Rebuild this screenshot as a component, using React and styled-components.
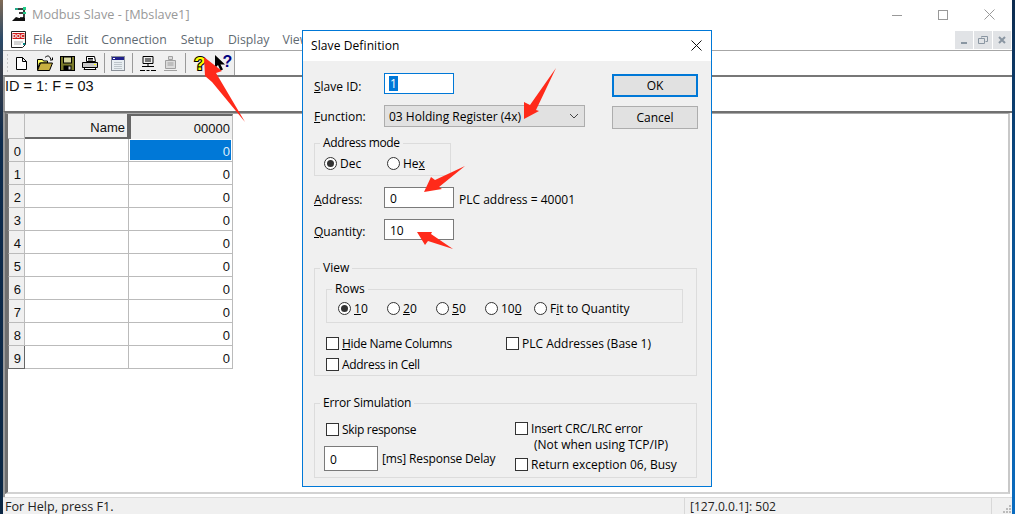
import React from 'react';
import styled, { createGlobalStyle } from 'styled-components';

const Global = createGlobalStyle`
  html, body { margin: 0; padding: 0; background: #0d2b4e; }
  * { box-sizing: border-box; }
`;

const Page = styled.div`
  position: relative; width: 1015px; height: 514px; overflow: hidden; display: flex;
  font-family: "Open Sans", "Noto Sans", sans-serif; font-size: 12px; color: #000;
`;
const DesktopLeft = styled.div`
  width: 3px; background: linear-gradient(#7f6a55 0, #2a4a6a 40px, #3a3f4a 70px, #0c2a4c 140px, #0b2744 100%);
`;
const DesktopRight = styled.div`
  width: 3px; background: linear-gradient(#0d2b4e 0, #0a4f8c 200px, #0a6cc0 100%);
`;
const Win = styled.div`
  flex: 1; display: flex; flex-direction: column; background: #fff; min-width: 0;
`;
const TitleBar = styled.div`
  height: 29px; display: flex; align-items: center; padding: 0 0 1px 9px; background: #fff; color: #999;
  font-size: 12.7px;
`;
const TitleText = styled.span` margin-left: 4px; `;
const WinControls = styled.div` margin-left: auto; display: flex; margin-top: 1px; `;
const WinBtn = styled.div` width: 46px; height: 29px; display: flex; align-items: center; justify-content: center; `;
const MenuBar = styled.div`
  height: 21px; display: flex; align-items: center; padding-left: 7px; background: #fff; color: #5f6a72;
  font-size: 12.3px;
`;
const MenuItem = styled.span` margin-left: ${p => p.$ml}px; margin-bottom: 1px; `;
const MdiButtons = styled.div` margin-left: auto; margin-right: 1px; display: flex; gap: 1px; align-self: flex-start; margin-top: 2px; `;
const MdiBtn = styled.div`
  width: 18px; height: 18px; background: #e1e3e6; display: flex; align-items: center; justify-content: center;
`;
const ToolRow = styled.div` height: 25px; border-top: 1px solid #a6a6a6; display: flex; background: #fff; `;
const Toolbar = styled.div`
  width: 232px; height: 24px; background: #f0f0f0; display: flex; align-items: center; padding-left: 3px;
  border-right: 1px solid #a0a0a0;
`;
const Grip = styled.div`
  width: 3px; height: 20px; margin-right: 2px;
  background-image: radial-gradient(#c8c8c8 1px, transparent 1px); background-size: 3px 4px;
`;
const ToolBtn = styled.div`
  width: ${p => p.$w || 22}px; height: 20px; display: flex; align-items: center; flex: none;
  justify-content: ${p => (p.$end ? 'flex-end' : 'center')};
`;
const ToolSep = styled.div` width: 1px; height: 20px; flex: none; background: #9a9a9a; margin: 0 ${p => p.$mr}px 0 ${p => p.$ml}px; `;
const InfoPane = styled.div`
  height: 36px; border-top: 2px solid #777; border-left: 2px solid #999;
  font-family: "Liberation Sans", sans-serif; font-size: 14.5px; line-height: 17px; padding-top: 1px; color: #111;
`;
const Mdi = styled.div`
  flex: 1; min-height: 0; border-top: 2px solid #707070; background: #fff; padding: 0 2px 3px 0;
  border-left: 2px solid #999;
`;
const Child = styled.div`
  height: 100%; border-top: 1px solid #a9a9a9; border-left: 3px solid #6f6f6f; border-right: 2px solid #c8c8c8;
  border-bottom: 2px solid #d2d2d2; display: flex; align-items: flex-start;
`;
const Grid = styled.div`
  display: grid; grid-template-columns: 17px 104px 104px; grid-auto-rows: 23px; grid-template-rows: 25px;
  font-family: "Liberation Sans", sans-serif; font-size: 13px; color: #111;
`;
const Corner = styled.div` background: #f0f0f0; border-right: 1px solid #bbb; border-bottom: 1px solid #bbb; `;
const ColHead = styled.div`
  background: #f0f0f0; display: flex; align-items: center; justify-content: flex-end;
  padding: ${p => (p.$sel ? '1px 2px 0 0' : '4px 2px 0 0')};
  border-bottom: ${p => (p.$sel ? 'none' : '2px solid #666')};
  border-right: ${p => (p.$sel ? '1px solid #bbb' : '2px solid #666')};
  border-top: ${p => (p.$sel ? '2px solid #666' : 'none')};
  border-left: ${p => (p.$sel ? '2px solid #666' : 'none')};
`;
const RowHead = styled.div`
  background: #f0f0f0; display: flex; align-items: center; justify-content: flex-end; padding: 2px 3px 0 0;
  border-right: 1px solid ${p => (p.$last ? '#666' : '#bbb')}; border-bottom: 1px solid ${p => (p.$last ? '#666' : '#bbb')};
  border-left: 1px solid #777;
`;
const Cell = styled.div`
  background: #fff; display: flex; align-items: center; justify-content: flex-end; padding: 2px 2px 0 0;
  border-right: 1px solid #bbb; border-bottom: 1px solid #bbb;
`;
const SelCell = styled(Cell)`
  background: #0078d7; color: #dfeefa; box-shadow: inset 0 0 0 1px #fff;
`;
const StatusBar = styled.div`
  height: 17px; border-top: 1px solid #dcdcdc; background: #f0f0f0; display: flex; align-items: center; font-size: 12.6px; color: #222;
  padding-left: 2px; position: relative;
`;
const StatusRight = styled.div`
  margin-left: auto; width: 308px; height: 100%; border-left: 1px solid #d8d8d8; padding-left: 5px; display: flex; align-items: center;
  border-right: 1px solid #d8d8d8; margin-right: 20px; font-size: 12.1px;
`;
const ResizeGrip = styled.svg` position: absolute; right: 0; bottom: 0; `;

const Dialog = styled.div`
  position: absolute; left: 302px; top: 30px; width: 410px; height: 457px; border: 1px solid #0078d7; background: #f0f0f0;
  display: flex; flex-direction: column;
`;
const DlgTitle = styled.div`
  height: 30px; background: #fff; display: flex; align-items: center; padding: 0 9px 2px 8px; font-size: 12px; flex: none;
  justify-content: space-between; letter-spacing: 0.1px;
`;
const DlgBody = styled.div` padding: 0 14px 0 11px; flex: 1; `;
const Top = styled.div` display: flex; `;
const TopLeft = styled.div` width: 271px; `;
const BtnCol = styled.div` margin-left: 27px; padding-top: 13px; display: flex; flex-direction: column; gap: 9px; `;
const Btn = styled.div`
  width: 86px; height: 23px; background: #e1e1e1; display: flex; align-items: center; justify-content: center;
  border: ${p => (p.$def ? '2px solid #0078d7' : '1px solid #adadad')};
`;
const FormRow = styled.div` display: flex; align-items: center; margin-top: ${p => p.$mt}px; `;
const Label = styled.span` width: 70px; flex: none; line-height: 15px; padding-top: ${p => p.$pt ?? 3}px; `;
const Note = styled.span` margin-left: 5px; padding-top: 3px; `;
const TextBox = styled.div`
  width: ${p => p.$w || 70}px; height: ${p => p.$h || 21}px; background: #fff; border: 1px solid ${p => (p.$focus ? '#0078d7' : '#7a7a7a')};
  padding: ${p => (p.$focus ? 0 : 1)}px 0 0 5px; display: flex; align-items: center; flex: none;
`;
const Sel = styled.span` background: #0078d7; color: #fff; padding: 0 1px; line-height: 15px; height: 15px; margin-left: -1px; `;
const Select = styled.div`
  width: 201px; height: 22px; background: #e1e1e1; border: 1px solid #adadad; display: flex; align-items: center;
  justify-content: space-between; padding: 0 5px 0 4px;
`;
const Group = styled.fieldset`
  margin: ${p => p.$mt}px 0 0 ${p => p.$ml || 0}px; padding: ${p => p.$pt ?? 5}px 0 ${p => p.$pb || 0}px 0; border: 1px solid #dcdcdc;
  width: ${p => p.$w}px; min-width: 0; display: block;
`;
const Legend = styled.legend` margin-left: 5px; padding: 0 3px; height: 16px; line-height: 16px; font-size: 12px; `;
const Tight = styled.span` letter-spacing: ${p => p.$s || -0.3}px; white-space: nowrap; `;
const ModeRow = styled.div` display: flex; margin-left: 9px; margin-top: -1px; `;
const Opt = styled.label`
  display: flex; align-items: center; width: ${p => (p.$w ? p.$w + 'px' : 'auto')}; height: 16px; flex: none;
  margin-top: ${p => p.$mt || 0}px;
`;
const Radio = styled.span`
  width: 13px; height: 13px; border-radius: 50%; border: 1px solid #333; background: #fff; margin-right: 3px; flex: none;
  display: flex; align-items: center; justify-content: center;
  &::after { content: ""; width: 7px; height: 7px; border-radius: 50%; background: ${p => (p.$on ? '#333' : 'transparent')}; }
`;
const Check = styled.span` width: 13px; height: 13px; border: 1px solid #333; background: #fff; margin-right: 3px; flex: none; `;
const RowsLine = styled.div` display: flex; margin: 3px 0 6px 11px; `;
const CheckRow = styled.div` display: flex; margin: ${p => p.$mt}px 0 0 11px; `;
const ErrGrid = styled.div` display: flex; margin: 5px 0 5px 11px; `;
const ErrLeft = styled.div` width: 189px; flex: none; `;
const DelayRow = styled.div` display: flex; align-items: center; margin: 9px 0 0 -2px; gap: 4px; `;
const ErrRight = styled.div` margin-top: -1px; `;
const Indent = styled.div` height: 16px; line-height: 16px; margin: 1px 0 0 19px; `;

const Arrows = styled.svg` position: absolute; left: 0; top: 0; pointer-events: none; `;

const HelpText = styled.text` font-family: "Liberation Sans", sans-serif; font-weight: 700; paint-order: stroke; `;

const IconNew = () => (
  <svg width="13" height="15" viewBox="0 0 13 15"><path d="M1.5 1.500h6l4 4v8h-10z M7.500 1.500v4h4" fill="#fff" stroke="#000" /></svg>
);
const IconOpen = () => (
  <svg width="18" height="16" viewBox="0 0 18 16">
    <path d="M1.5 4.500h5l1 1.500h4v2h-8l-2 7z" fill="#ffff66" stroke="#000" />
    <path d="M1.5 15.500l3-7.500h12l-3 7.500z" fill="#c8b040" stroke="#000" />
    <path d="M9 2.500c2-2 4-2 5 0l1 2m1.500-2v2.500H14" fill="none" stroke="#000" />
  </svg>
);
const IconSave = () => (
  <svg width="15" height="15" viewBox="0 0 15 15">
    <rect x=".5" y=".5" width="14" height="14" fill="#7b7b2a" stroke="#000" />
    <rect x="3.500" y="1" width="8" height="6" fill="#d8d8a0" stroke="#000" />
    <rect x="3.500" y="9.500" width="8" height="5" fill="#000" /><rect x="8.500" y="10.500" width="2" height="3" fill="#ccc" />
  </svg>
);
const IconPrint = () => (
  <svg width="18" height="16" viewBox="0 0 18 16">
    <path d="M5.500 1.500h8l1 5h-9z" fill="#fff" stroke="#000" />
    <path d="M1.500 7.500h15v5h-15z" fill="#c8c8c8" stroke="#000" />
    <path d="M4 12.500h10l1 2H3z" fill="#fff" stroke="#000" />
    <path d="M7 3.500h5M7 5h5" stroke="#000" /><rect x="13" y="9" width="2" height="1" fill="#ff0" />
  </svg>
);
const IconWindow = () => (
  <svg width="14" height="15" viewBox="0 0 14 15">
    <rect x="0.5" y="0.5" width="13" height="14" fill="#e8eef2" stroke="#8a9098" />
    <rect x="1" y="1" width="12" height="3" fill="#20208a" /><rect x="2" y="2" width="2" height="1" fill="#fff" />
    <path d="M3 6.500h8M3 8.500h8M3 10.500h8M3 12.500h8" stroke="#bcc4ca" />
  </svg>
);
const IconConnect = () => (
  <svg width="16" height="17" viewBox="0 0 16 17">
    <path d="M3 1.500h10v7H3z" fill="#f0f0f0" stroke="#000" /><path d="M5 4h6M5 6h6" stroke="#000" />
    <path d="M8 8.500v3M2 11.500h12" stroke="#000" /><path d="M0 15.500h5M6.500 15.500h3M11 15.500h5" stroke="#000" />
  </svg>
);
const IconDisconnect = () => (
  <svg width="15" height="17" viewBox="0 0 15 17">
    <path d="M5.500 1.500h4v3h-4zM2.500 5.500h10v8h-10z" fill="#dcdcdc" stroke="#a0a0a0" />
    <path d="M4.500 8h6M4.500 10h6M1 15.500h13" stroke="#a0a0a0" />
  </svg>
);
const IconHelp = () => (
  <svg width="14" height="20" viewBox="0 0 14 20">
    <HelpText x="7" y="17" textAnchor="middle" fontSize="19" fill="#ffff00" stroke="#000" strokeWidth="2.200">?</HelpText>
  </svg>
);
const IconWhat = () => (
  <svg width="18" height="18" viewBox="0 0 18 18">
    <path d="M0 1v13l3-3 2.500 5.500 2.500-1-2.500-5h4.500z" fill="#000" />
    <HelpText x="12.500" y="13" textAnchor="middle" fontSize="16" fill="#000080">?</HelpText>
  </svg>
);
const AppIcon = () => (
  <svg width="16" height="17" viewBox="0 0 16 17">
    <path d="M5 3h7M12 3v9M12 7h-5M12 12h-4" stroke="#000" strokeWidth="1.500" fill="none" />
    <path d="M0 15l4-4 3 1 6 0v3z" fill="#111" />
    <rect x="3" y="2" width="3" height="2" fill="#2a8" /><rect x="11" y="1" width="3" height="3" fill="#2c8" /><rect x="11" y="6" width="3" height="2" fill="#2c8" />
  </svg>
);
const DocIcon = () => (
  <svg width="17" height="19" viewBox="0 0 17 19">
    <path d="M1.500 1.500h14v13l-3 3h-11z" fill="#fff" stroke="#222" />
    <rect x="2.500" y="3" width="12" height="6" fill="#d01818" />
    <path d="M4 12h9M4 14h7" stroke="#aaa" /><rect x="13" y="13" width="2" height="2" fill="#088" />
    <text x="8.500" y="8" textAnchor="middle" fontSize="5.500" fontWeight="700" fill="#fff" fontFamily="Liberation Sans">DOC</text>
  </svg>
);

const Bar = styled.span` display: contents; `;

export default function App() {
  const rows = [0, 1, 2, 3, 4, 5, 6, 7, 8, 9];
  return (
    <Page>
      <Global />
      <DesktopLeft />
      <Win>
        <TitleBar>
          <AppIcon />
          <TitleText>Modbus Slave - [Mbslave1]</TitleText>
          <WinControls>
            <WinBtn><svg width="10" height="10"><path d="M0 5.500h10" stroke="#999" /></svg></WinBtn>
            <WinBtn><svg width="10" height="10"><rect x=".5" y=".5" width="9" height="9" fill="none" stroke="#999" /></svg></WinBtn>
            <WinBtn><svg width="11" height="11"><path d="M.5.500l10 10M10.500.500l-10 10" stroke="#999" /></svg></WinBtn>
          </WinControls>
        </TitleBar>
        <MenuBar>
          <DocIcon />
          <MenuItem $ml={6}>File</MenuItem>
          <MenuItem $ml={14}>Edit</MenuItem>
          <MenuItem $ml={13}>Connection</MenuItem>
          <MenuItem $ml={14}>Setup</MenuItem>
          <MenuItem $ml={14}>Display</MenuItem>
          <MenuItem $ml={13}>View</MenuItem>
          <MdiButtons>
            <MdiBtn><svg width="10" height="10"><path d="M2 8h6" stroke="#8a96a2" strokeWidth="2" /></svg></MdiBtn>
            <MdiBtn><svg width="10" height="10"><path d="M3.500 2.500v-1h6v5h-2M.5 3.500h6v5h-6z" fill="none" stroke="#8a96a2" /></svg></MdiBtn>
            <MdiBtn><svg width="10" height="10"><path d="M2 2l6 6M8 2l-6 6" stroke="#8a96a2" strokeWidth="2" /></svg></MdiBtn>
          </MdiButtons>
        </MenuBar>
        <ToolRow>
          <Toolbar>
            <Grip />
            <ToolBtn $w={21}><IconNew /></ToolBtn>
            <ToolBtn $w={26}><IconOpen /></ToolBtn>
            <ToolBtn $w={18}><IconSave /></ToolBtn>
            <ToolBtn $w={28}><IconPrint /></ToolBtn>
            <ToolSep $ml={0} $mr={3} />
            <ToolBtn $w={20}><IconWindow /></ToolBtn>
            <ToolSep $ml={4} $mr={4} />
            <ToolBtn $w={22}><IconConnect /></ToolBtn>
            <ToolBtn $w={22}><IconDisconnect /></ToolBtn>
            <ToolSep $ml={4} $mr={4} />
            <ToolBtn $w={19}><IconHelp /></ToolBtn>
            <ToolBtn $w={24} $end><IconWhat /></ToolBtn>
          </Toolbar>
        </ToolRow>
        <InfoPane>ID = 1: F = 03</InfoPane>
        <Mdi>
          <Child>
            <Grid>
              <Corner />
              <ColHead>Name</ColHead>
              <ColHead $sel>00000</ColHead>
              {rows.map(r => (
                <Bar key={r}>
                  <RowHead $last={r === 9}>{r}</RowHead>
                  <Cell />
                  {r === 0 ? <SelCell>0</SelCell> : <Cell>0</Cell>}
                </Bar>
              ))}
            </Grid>
          </Child>
        </Mdi>
        <StatusBar>
          For Help, press F1.
          <StatusRight>[127.0.0.1]: 502</StatusRight>
          <ResizeGrip width="12" height="12"><path d="M9 3h2v2H9zM6 6h2v2H6zM9 6h2v2H9zM3 9h2v2H3zM6 9h2v2H6zM9 9h2v2H9z" fill="#bbb" /></ResizeGrip>
        </StatusBar>
      </Win>
      <DesktopRight />

      <Dialog>
        <DlgTitle>
          Slave Definition
          <svg width="11" height="11"><path d="M.5.500l10 10M10.500.500l-10 10" stroke="#111" /></svg>
        </DlgTitle>
        <DlgBody>
          <Top>
            <TopLeft>
              <FormRow $mt={12}>
                <Label $pt={5}><u>S</u>lave ID:</Label>
                <TextBox $focus><Sel>1</Sel></TextBox>
              </FormRow>
              <FormRow $mt={11}>
                <Label $pt={1}><u>F</u>unction:</Label>
                <Select>
                  03 Holding Register (4x)
                  <svg width="10" height="6"><path d="M1 1l4 4 4-4" fill="none" stroke="#444" /></svg>
                </Select>
              </FormRow>
            </TopLeft>
            <BtnCol>
              <Btn $def>OK</Btn>
              <Btn>Cancel</Btn>
            </BtnCol>
          </Top>
          <Group $mt={6} $w={137} $pb={4}>
            <Legend><Tight $s={-0.35}>Address mode</Tight></Legend>
            <ModeRow>
              <Opt $w={63}><Radio $on />Dec</Opt>
              <Opt><Radio />He<u>x</u></Opt>
            </ModeRow>
          </Group>
          <FormRow $mt={11}>
            <Label><u>A</u>ddress:</Label>
            <TextBox>0</TextBox>
            <Note>PLC address = 40001</Note>
          </FormRow>
          <FormRow $mt={11}>
            <Label><u>Q</u>uantity:</Label>
            <TextBox>10</TextBox>
          </FormRow>
          <Group $mt={20} $w={383} $pb={3}>
            <Legend>View</Legend>
            <Group $mt={0} $ml={11} $w={357} $pt={0}>
              <Legend>Rows</Legend>
              <RowsLine>
                <Opt $w={49}><Radio $on /><u>1</u>0</Opt>
                <Opt $w={49}><Radio /><u>2</u>0</Opt>
                <Opt $w={49}><Radio /><u>5</u>0</Opt>
                <Opt $w={49}><Radio />10<u>0</u></Opt>
                <Opt><Radio />F<u>i</u>t to Quantity</Opt>
              </RowsLine>
            </Group>
            <CheckRow $mt={12}>
              <Opt $w={180}><Check /><Tight><u>H</u>ide Name Columns</Tight></Opt>
              <Opt><Check />PLC Addresses (Base 1)</Opt>
            </CheckRow>
            <CheckRow $mt={5}>
              <Opt><Check /><Tight>Address in Cell</Tight></Opt>
            </CheckRow>
          </Group>
          <Group $mt={19} $w={383}>
            <Legend><Tight $s={-0.2}>Error Simulation</Tight></Legend>
            <ErrGrid>
              <ErrLeft>
                <Opt><Check /><Tight>Skip response</Tight></Opt>
                <DelayRow>
                  <TextBox $w={54} $h={25}>0</TextBox>
                  <Tight $s={-0.15}>[ms] Response Delay</Tight>
                </DelayRow>
              </ErrLeft>
              <ErrRight>
                <Opt><Check /><Tight $s={-0.2}>Insert CRC/LRC error</Tight></Opt>
                <Indent>(Not when using TCP/IP)</Indent>
                <Opt $mt={3}><Check />Return exception 06, Busy</Opt>
              </ErrRight>
            </ErrGrid>
          </Group>
        </DlgBody>
      </Dialog>

      <Arrows width="1015" height="514" viewBox="0 0 1015 514">
        <g fill="#ff2a1a">
          <polygon points="204,57 222,71 216,73 245,122 212,82 205,76" />
          <polygon points="556,68 536,110 539,111 524,119 524,102 530,105" />
          <polygon points="465,166 439,187 442,189 424,192 431,177 435,180" />
          <polygon points="453,249 431,234 432,232 417,232 425,245 428,241" />
        </g>
      </Arrows>
    </Page>
  );
}
